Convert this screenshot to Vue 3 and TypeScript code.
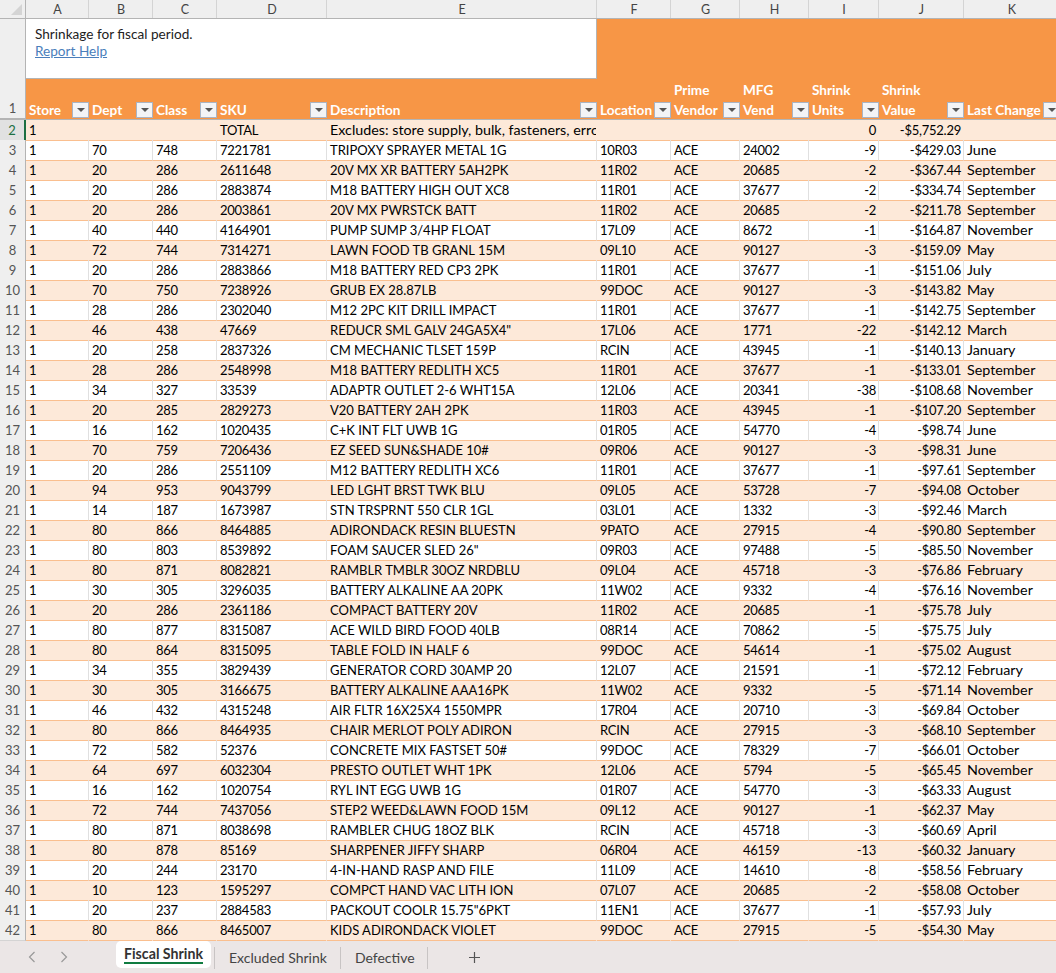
<script setup lang="ts">
interface SheetRow {
  num: number
  cells: string[]
}

const columns = ['A', 'B', 'C', 'D', 'E', 'F', 'G', 'H', 'I', 'J', 'K']

const headers = [
  { top: '', label: 'Store' },
  { top: '', label: 'Dept' },
  { top: '', label: 'Class' },
  { top: '', label: 'SKU' },
  { top: '', label: 'Description' },
  { top: '', label: 'Location' },
  { top: 'Prime', label: 'Vendor' },
  { top: 'MFG', label: 'Vend' },
  { top: 'Shrink', label: 'Units' },
  { top: 'Shrink', label: 'Value' },
  { top: '', label: 'Last Change' }
]

const raw = `1|||TOTAL|Excludes: store supply, bulk, fasteners, errors and other||||0|-$5,752.29|
1|70|748|7221781|TRIPOXY SPRAYER METAL 1G|10R03|ACE|24002|-9|-$429.03|June
1|20|286|2611648|20V MX XR BATTERY 5AH2PK|11R02|ACE|20685|-2|-$367.44|September
1|20|286|2883874|M18 BATTERY HIGH OUT XC8|11R01|ACE|37677|-2|-$334.74|September
1|20|286|2003861|20V MX PWRSTCK BATT|11R02|ACE|20685|-2|-$211.78|September
1|40|440|4164901|PUMP SUMP 3/4HP FLOAT|17L09|ACE|8672|-1|-$164.87|November
1|72|744|7314271|LAWN FOOD TB GRANL 15M|09L10|ACE|90127|-3|-$159.09|May
1|20|286|2883866|M18 BATTERY RED CP3 2PK|11R01|ACE|37677|-1|-$151.06|July
1|70|750|7238926|GRUB EX 28.87LB|99DOC|ACE|90127|-3|-$143.82|May
1|28|286|2302040|M12 2PC KIT DRILL IMPACT|11R01|ACE|37677|-1|-$142.75|September
1|46|438|47669|REDUCR SML GALV 24GA5X4"|17L06|ACE|1771|-22|-$142.12|March
1|20|258|2837326|CM MECHANIC TLSET 159P|RCIN|ACE|43945|-1|-$140.13|January
1|28|286|2548998|M18 BATTERY REDLITH XC5|11R01|ACE|37677|-1|-$133.01|September
1|34|327|33539|ADAPTR OUTLET 2-6 WHT15A|12L06|ACE|20341|-38|-$108.68|November
1|20|285|2829273|V20 BATTERY 2AH 2PK|11R03|ACE|43945|-1|-$107.20|September
1|16|162|1020435|C+K INT FLT UWB 1G|01R05|ACE|54770|-4|-$98.74|June
1|70|759|7206436|EZ SEED SUN&SHADE 10#|09R06|ACE|90127|-3|-$98.31|June
1|20|286|2551109|M12 BATTERY REDLITH XC6|11R01|ACE|37677|-1|-$97.61|September
1|94|953|9043799|LED LGHT BRST TWK BLU|09L05|ACE|53728|-7|-$94.08|October
1|14|187|1673987|STN TRSPRNT 550 CLR 1GL|03L01|ACE|1332|-3|-$92.46|March
1|80|866|8464885|ADIRONDACK RESIN BLUESTN|9PATO|ACE|27915|-4|-$90.80|September
1|80|803|8539892|FOAM SAUCER SLED 26"|09R03|ACE|97488|-5|-$85.50|November
1|80|871|8082821|RAMBLR TMBLR 30OZ NRDBLU|09L04|ACE|45718|-3|-$76.86|February
1|30|305|3296035|BATTERY ALKALINE AA 20PK|11W02|ACE|9332|-4|-$76.16|November
1|20|286|2361186|COMPACT BATTERY 20V|11R02|ACE|20685|-1|-$75.78|July
1|80|877|8315087|ACE WILD BIRD FOOD 40LB|08R14|ACE|70862|-5|-$75.75|July
1|80|864|8315095|TABLE FOLD IN HALF 6|99DOC|ACE|54614|-1|-$75.02|August
1|34|355|3829439|GENERATOR CORD 30AMP 20|12L07|ACE|21591|-1|-$72.12|February
1|30|305|3166675|BATTERY ALKALINE AAA16PK|11W02|ACE|9332|-5|-$71.14|November
1|46|432|4315248|AIR FLTR 16X25X4 1550MPR|17R04|ACE|20710|-3|-$69.84|October
1|80|866|8464935|CHAIR MERLOT POLY ADIRON|RCIN|ACE|27915|-3|-$68.10|September
1|72|582|52376|CONCRETE MIX FASTSET 50#|99DOC|ACE|78329|-7|-$66.01|October
1|64|697|6032304|PRESTO OUTLET WHT 1PK|12L06|ACE|5794|-5|-$65.45|November
1|16|162|1020754|RYL INT EGG UWB 1G|01R07|ACE|54770|-3|-$63.33|August
1|72|744|7437056|STEP2 WEED&LAWN FOOD 15M|09L12|ACE|90127|-1|-$62.37|May
1|80|871|8038698|RAMBLER CHUG 18OZ BLK|RCIN|ACE|45718|-3|-$60.69|April
1|80|878|85169|SHARPENER JIFFY SHARP|06R04|ACE|46159|-13|-$60.32|January
1|20|244|23170|4-IN-HAND RASP AND FILE|11L09|ACE|14610|-8|-$58.56|February
1|10|123|1595297|COMPCT HAND VAC LITH ION|07L07|ACE|20685|-2|-$58.08|October
1|20|237|2884583|PACKOUT COOLR 15.75"6PKT|11EN1|ACE|37677|-1|-$57.93|July
1|80|866|8465007|KIDS ADIRONDACK VIOLET|99DOC|ACE|27915|-5|-$54.30|May`

const rows: SheetRow[] = raw.split('\n').map((line, i) => ({
  num: i + 2,
  cells: line.split('|')
}))

function cellClass(col: number) {
  return {
    num: col === 8 || col === 9,
    desc: col === 4,
    month: col === 10
  }
}
</script>

<template>
  <div class="workbook">
    <div class="sheet">
      <div class="col-row">
        <div class="corner"><span class="corner-mark"></span></div>
        <div v-for="c in columns" :key="c" class="col-head">{{ c }}</div>
      </div>

      <div class="header-row">
        <div class="row-num tall">1</div>
        <div v-for="h in headers" :key="h.label" class="head-cell">
          <div class="head-top">{{ h.top }}</div>
          <div class="head-label">{{ h.label }}</div>
          <span class="filter"><i></i></span>
        </div>
        <div class="note">
          <div>Shrinkage for fiscal period.</div>
          <a class="help" href="#">Report Help</a>
        </div>
      </div>

      <div
        v-for="row in rows"
        :key="row.num"
        class="data-row"
        :class="{ band: row.num % 2 === 0, total: row.num === 2 }"
      >
        <div class="row-num" :class="{ active: row.num === 2 }">{{ row.num }}</div>
        <div
          v-for="(cell, i) in row.cells"
          :key="i"
          class="cell"
          :class="cellClass(i)"
        >{{ cell }}</div>
      </div>
    </div>

    <div class="tabs">
      <svg class="nav" width="10" height="14" viewBox="0 0 10 14"><path d="M7.5 2 2.5 7l5 5" /></svg>
      <svg class="nav next" width="10" height="14" viewBox="0 0 10 14"><path d="M2.5 2l5 5-5 5" /></svg>
      <div class="tab current">Fiscal Shrink</div>
      <div class="tab first">Excluded Shrink</div>
      <div class="tab last">Defective</div>
      <svg class="plus" width="13" height="13" viewBox="0 0 13 13"><path d="M6.5 1v11M1 6.5h11" /></svg>
    </div>
  </div>
</template>

<style scoped>
.workbook {
  width: 1056px;
  height: 973px;
  overflow: hidden;
  display: flex;
  flex-direction: column;
  background: #fff;
  font-family: Lato, "Open Sans", sans-serif;
  font-size: 13.6px;
  color: #000;
}

.sheet {
  height: 941px;
  overflow: hidden;
  flex: none;
}

.col-row,
.header-row,
.data-row {
  display: grid;
  grid-template-columns: 26px 63px 64px 64px 110px 270px 74px 69px 69px 70px 85px 96px;
  width: 1060px;
}

.col-row {
  height: 19px;
  background: #efefef;
  border-bottom: 1px solid #b4b4b4;
  box-sizing: border-box;
  color: #444;
  font-size: 12.5px;
}

.corner {
  position: relative;
  border-right: 1px solid #b4b4b4;
}

.corner-mark {
  position: absolute;
  right: 3px;
  bottom: 3px;
  border-left: 11px solid transparent;
  border-bottom: 11px solid #d4d4d4;
}

.col-head {
  display: flex;
  align-items: center;
  justify-content: center;
  padding-left: 1px;
  border-right: 1px solid #d4d4d4;
}

.row-num {
  background: #efefef;
  color: #555;
  font-size: 13px;
  text-align: center;
  border-right: 1px solid #b4b4b4;
  border-bottom: 1px solid #d4d4d4;
  box-sizing: border-box;
  line-height: 20px;
}

.row-num.active {
  background: #e1e1e1;
  color: #1d6f42;
  border-right: 2px solid #1d6f42;
}

.row-num.tall {
  display: flex;
  align-items: flex-end;
  justify-content: center;
  border-bottom-color: #b4b4b4;
}

.header-row {
  position: relative;
  height: 101px;
  background: #f79646;
  border-bottom: 1px solid #b4b4b4;
  box-sizing: border-box;
}

.head-cell {
  position: relative;
  display: flex;
  flex-direction: column;
  justify-content: flex-end;
  padding-left: 3px;
  color: #fff;
  font-weight: 700;
  white-space: nowrap;
  min-width: 0;
}

.head-top {
  height: 22px;
  line-height: 22px;
}

.head-label {
  height: 18px;
  line-height: 18px;
}

.filter {
  position: absolute;
  right: 0;
  bottom: 1px;
  width: 17px;
  height: 16px;
  box-sizing: border-box;
  background: #f3f4f6;
  border: 1px solid #a9b4c4;
  display: flex;
  align-items: center;
  justify-content: center;
}

.filter i {
  border-left: 4px solid transparent;
  border-right: 4px solid transparent;
  border-top: 4px solid #555;
}

.note {
  position: absolute;
  left: 25px;
  top: 0;
  width: 572px;
  height: 60px;
  box-sizing: border-box;
  background: #fff;
  border-bottom: 1px solid #b4b4b4;
  border-right: 1px solid #b4b4b4;
  border-left: 1px solid #b4b4b4;
  padding: 7px 9px;
  line-height: 17px;
  color: #222;
}

.help {
  color: #4a7ebb;
  text-decoration: underline;
}

.data-row {
  height: 20px;
  background: #fff;
}

.data-row.band {
  background: #fde9d9;
}

.cell {
  box-sizing: border-box;
  padding: 0 2px 0 3px;
  font-size: 13px;
  letter-spacing: -0.25px;
  line-height: 21px;
  white-space: nowrap;
  overflow: hidden;
  border-right: 1px solid #e0e0e0;
  border-bottom: 1px solid #fabf8f;
  min-width: 0;
}

.band .cell {
  border-right-color: transparent;
}

.cell.desc {
  letter-spacing: 0;
}

.cell.month {
  font-size: 14.3px;
  letter-spacing: 0;
  line-height: 19px;
}

.total .cell.desc {
  font-size: 14.3px;
  letter-spacing: 0;
  line-height: 19px;
}

.cell.num {
  text-align: right;
}

.tabs {
  flex: 1;
  display: flex;
  align-items: center;
  background: #ebe6e6;
  color: #444;
  font-size: 14px;
}

.nav {
  margin-left: 27px;
  flex: none;
}

.nav.next {
  margin-left: 22px;
}

.nav path,
.plus path {
  fill: none;
  stroke: #999;
  stroke-width: 1.2;
}

.plus {
  margin-left: 40px;
}

.plus path {
  stroke: #555;
}

.tab {
  padding: 0 14px;
  height: 22px;
  line-height: 22px;
  border-right: 1px solid #c8c4c4;
  margin-top: 1px;
}

.tab.first {
  margin-left: 3px;
  padding-right: 13px;
  border-left: 1px solid #c8c4c4;
}

.tab.last {
  padding-right: 12px;
}

.tab.current {
  height: 27px;
  margin-left: 47px;
  margin-top: -5px;
  padding: 0 8px;
  line-height: 26px;
  background: #fff;
  border-right: none;
  border-radius: 5px;
  font-size: 14.2px;
  font-weight: 700;
  color: #333;
  position: relative;
}

.tab.current::after {
  content: "";
  position: absolute;
  left: 8px;
  right: 8px;
  bottom: 4px;
  height: 2px;
  background: #107c41;
}
</style>
